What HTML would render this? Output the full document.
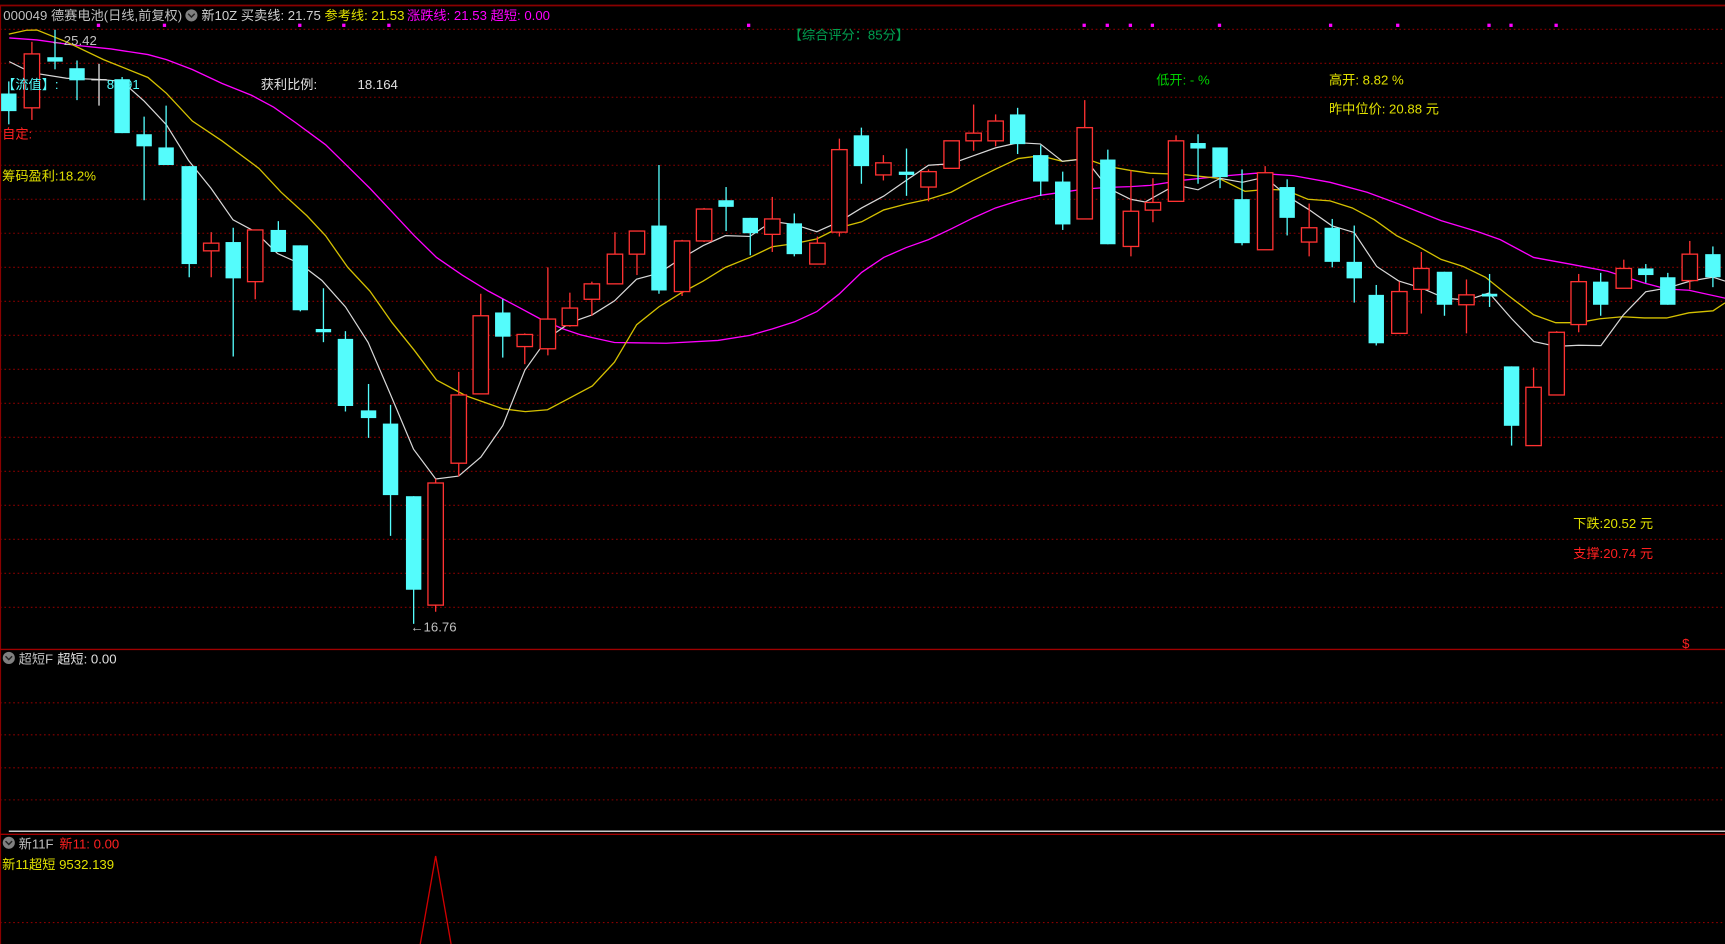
<!DOCTYPE html>
<html><head><meta charset="utf-8"><style>
html,body{margin:0;padding:0;background:#000;overflow:hidden}
svg{display:block}
text{font-family:"Liberation Sans","Noto Sans CJK SC",sans-serif;font-size:12px}
</style></head><body>
<svg width="1725" height="944" viewBox="0 0 1568 858" preserveAspectRatio="none" xmlns="http://www.w3.org/2000/svg">
<rect width="1568" height="858" fill="#000"/>
<g stroke="#8a0000" stroke-width="1" stroke-dasharray="1.5 2.5">
<line x1="0" x2="1568" y1="26.6" y2="26.6"/><line x1="0" x2="1568" y1="57.5" y2="57.5"/><line x1="0" x2="1568" y1="88.4" y2="88.4"/><line x1="0" x2="1568" y1="119.3" y2="119.3"/><line x1="0" x2="1568" y1="150.2" y2="150.2"/><line x1="0" x2="1568" y1="181.1" y2="181.1"/><line x1="0" x2="1568" y1="212" y2="212"/><line x1="0" x2="1568" y1="243" y2="243"/><line x1="0" x2="1568" y1="273.9" y2="273.9"/><line x1="0" x2="1568" y1="304.8" y2="304.8"/><line x1="0" x2="1568" y1="335.7" y2="335.7"/><line x1="0" x2="1568" y1="366.6" y2="366.6"/><line x1="0" x2="1568" y1="397.5" y2="397.5"/><line x1="0" x2="1568" y1="428.4" y2="428.4"/><line x1="0" x2="1568" y1="459.3" y2="459.3"/><line x1="0" x2="1568" y1="490.2" y2="490.2"/><line x1="0" x2="1568" y1="521.1" y2="521.1"/><line x1="0" x2="1568" y1="552" y2="552"/>
<line x1="0" x2="1568" y1="638.8" y2="638.8"/><line x1="0" x2="1568" y1="667.9" y2="667.9"/><line x1="0" x2="1568" y1="697.9" y2="697.9"/><line x1="0" x2="1568" y1="727" y2="727"/>
<line x1="0" x2="1568" y1="838.5" y2="838.5"/>
</g>
<line x1="0" x2="1568" y1="5" y2="5" stroke="#8a0000" stroke-width="1.5"/>
<line x1="0.5" x2="0.5" y1="5" y2="858" stroke="#8a0000" stroke-width="1"/>
<line x1="0" x2="1568" y1="590.3" y2="590.3" stroke="#a00000" stroke-width="1.3"/>
<line x1="8" x2="1568" y1="755.5" y2="755.5" stroke="#c8c8c8" stroke-width="1.3"/>
<line x1="0" x2="1568" y1="758.3" y2="758.3" stroke="#a00000" stroke-width="1.3"/>
<g fill="#ff00ff">
<rect x="88" y="21.5" width="3" height="3"/><rect x="148" y="21.5" width="3" height="3"/><rect x="271" y="21.5" width="3" height="3"/><rect x="311" y="21.5" width="3" height="3"/><rect x="352" y="21.5" width="3" height="3"/><rect x="679" y="21.5" width="3" height="3"/><rect x="984" y="21.5" width="3" height="3"/><rect x="1005" y="21.5" width="3" height="3"/><rect x="1026" y="21.5" width="3" height="3"/><rect x="1046" y="21.5" width="3" height="3"/><rect x="1107" y="21.5" width="3" height="3"/><rect x="1208" y="21.5" width="3" height="3"/><rect x="1269" y="21.5" width="3" height="3"/><rect x="1352" y="21.5" width="3" height="3"/><rect x="1372" y="21.5" width="3" height="3"/><rect x="1413" y="21.5" width="3" height="3"/>
</g>
<!-- MAs -->
<polyline fill="none" stroke="#ff00ff" stroke-width="1.2" points="8.4,34.5 33.6,36.3 67.2,41 100.9,44.5 134.5,49.6 151.3,54.2 174.8,63.2 201.7,75.8 228.6,86.6 248.8,97.4 269,111.7 295.9,131.5 316.1,151.3 336.2,171.1 356.4,192.6 376.6,214.2 396.8,234 420.3,250.1 443.8,264.5 470.7,278.9 490.9,289.7 511.1,298.7 527.2,304.1 538.4,306.9 558.5,311.3 605.6,312 652.7,309.4 681.6,304.8 701.8,299 722,292.6 742.5,283.2 762.6,267.4 783.2,247.6 803.3,234 823.8,225 844,217.8 864.5,208.1 884.7,198 904.9,189 925.4,182.6 945.6,177.5 965.7,174.7 986.3,171.8 1007.4,170.3 1027.6,169.6 1045.4,168.5 1074.5,163.9 1108.1,160.3 1141.8,157.4 1175.4,159.6 1209,165.7 1242.6,174.7 1276.3,187.2 1309.9,200.5 1343.5,210.6 1363.7,217.8 1394,234 1427.6,240.1 1461.2,246.5 1494.8,257.3 1515,262.7 1535.2,263.8 1568,271"/>
<polyline fill="none" stroke="#d4c000" stroke-width="1.2" points="8,31 24,27.5 33.6,27.3 60.5,38.1 94.1,54.2 134.5,70.4 151.3,84.8 174.8,110 201.7,128 235.4,153.1 255.5,174.7 279.1,196.2 295.9,214.2 316.1,243 336.2,264.5 356.4,293.3 376.6,318.4 396.8,345.4 423.7,359.8 457.3,371.6 477.5,374.1 497.7,372.4 518.2,361.6 538.4,350.8 558.5,329.2 578.7,295.1 598.9,278.9 619.1,266.3 639.2,255.5 659.4,243 681.6,234 701.8,224.3 722,221.4 742.5,217.1 762.6,207 783.2,201.6 803.3,190.8 823.8,185.4 844,181.1 864.5,174.7 884.7,163.9 904.9,153.8 925.4,144.1 945.6,141.6 965.7,146.6 986.3,144.1 1007.4,151.3 1027.6,154.9 1045.4,157.4 1074.5,158.5 1108.1,162.1 1131.7,173.9 1151.9,172.1 1168.7,172.8 1188.8,181.1 1209,182.6 1229.2,189 1249.4,199.8 1269.5,214.2 1289.7,224.3 1309.9,235.8 1330.1,242.2 1350.3,252 1370.4,268.1 1394,286.1 1414.1,293.3 1434.3,293.3 1454.5,289.7 1474.7,287.9 1494.8,289 1515,289 1535.2,284.3 1557.1,282.5 1568,275.3"/>
<polyline fill="none" stroke="#d8d8d8" stroke-width="1.1" points="8.4,56 28.6,66.1 60.5,71.1 90.8,72.2 111,74 131.1,92 151.3,113.5 171.5,146 191.7,171 211.8,199.8 232,210.6 252.2,230.4 272.4,239.5 292.5,254.8 314,278.9 334.6,311.2 354.7,358 375.9,408.3 396.1,435.3 416.9,432.7 437.1,415.5 457,386.8 477.1,336.4 497.6,307.6 518.2,293.3 538.4,286.1 558.5,273.5 578.7,253.7 598.9,248.3 619.1,235 639.2,223.2 659.4,214.2 681.6,214.9 701.8,201.2 722,204.1 742.5,210.6 762.6,201.6 783.2,189 803.3,178.2 823.8,163.9 844,150.2 864.5,148.8 884.7,141.6 904.9,134.4 925.4,129.7 945.6,130.8 965.7,146.6 986.3,144.4 1007.4,171 1027.6,181.1 1040.9,183.6 1068.5,168.2 1089,172.5 1109.2,162.1 1129.3,165.7 1149.8,161 1170,178.2 1190.2,190.8 1210.7,205.2 1230.9,211.3 1251.4,242.2 1271.6,255.5 1291.7,261.6 1313.3,271 1333.4,272.8 1353.6,266.3 1374.1,289.7 1394.3,310.5 1414.5,314.8 1435,313.8 1455.2,314.1 1475.7,286.1 1495.9,265.2 1516.1,261.6 1536.2,255.5 1557.1,251.9 1568,255.5"/>
<!-- cyan candles -->
<g stroke="#54fcfc" stroke-width="1.2">
<line x1="8" x2="8" y1="74" y2="113"/><line x1="50" x2="50" y1="27" y2="63"/><line x1="70" x2="70" y1="55" y2="91"/><line x1="111" x2="111" y1="70" y2="121"/><line x1="131" x2="131" y1="106" y2="182"/><line x1="151" x2="151" y1="96" y2="150"/><line x1="172" x2="172" y1="151" y2="252"/><line x1="212" x2="212" y1="207" y2="324"/><line x1="253" x2="253" y1="201" y2="229"/><line x1="273" x2="273" y1="223" y2="283"/><line x1="294" x2="294" y1="262" y2="311"/><line x1="314" x2="314" y1="301" y2="374"/><line x1="335" x2="335" y1="349" y2="398"/><line x1="355" x2="355" y1="368" y2="487"/><line x1="376" x2="376" y1="451" y2="567"/><line x1="457" x2="457" y1="272" y2="325"/><line x1="599" x2="599" y1="150" y2="267"/><line x1="660" x2="660" y1="170" y2="210"/><line x1="682" x2="682" y1="198" y2="232"/><line x1="722" x2="722" y1="194" y2="233"/><line x1="783" x2="783" y1="116" y2="167"/><line x1="824" x2="824" y1="135" y2="178"/><line x1="925" x2="925" y1="98" y2="140"/><line x1="946" x2="946" y1="132" y2="178"/><line x1="966" x2="966" y1="156" y2="209"/><line x1="1007" x2="1007" y1="136" y2="222"/><line x1="1089" x2="1089" y1="122" y2="167"/><line x1="1109" x2="1109" y1="134" y2="171"/><line x1="1129" x2="1129" y1="154" y2="223"/><line x1="1170" x2="1170" y1="163" y2="214"/><line x1="1211" x2="1211" y1="199" y2="243"/><line x1="1231" x2="1231" y1="205" y2="275"/><line x1="1251" x2="1251" y1="259" y2="314"/><line x1="1313" x2="1313" y1="247" y2="287"/><line x1="1354" x2="1354" y1="249" y2="279"/><line x1="1374" x2="1374" y1="333" y2="405"/><line x1="1455" x2="1455" y1="248" y2="287"/><line x1="1496" x2="1496" y1="240" y2="257"/><line x1="1516" x2="1516" y1="248" y2="277"/><line x1="1557" x2="1557" y1="224" y2="261"/>
</g>
<g fill="#54fcfc">
<rect x="1" y="85" width="14" height="16"/><rect x="43" y="52" width="14" height="4"/><rect x="63" y="62" width="14" height="11"/><rect x="104" y="72" width="14" height="49"/><rect x="124" y="122" width="14" height="11"/><rect x="144" y="134" width="14" height="16"/><rect x="165" y="151" width="14" height="89"/><rect x="205" y="220" width="14" height="33"/><rect x="246" y="209" width="14" height="20"/><rect x="266" y="223" width="14" height="59"/><rect x="287" y="299" width="14" height="3"/><rect x="307" y="308" width="14" height="61"/><rect x="328" y="373" width="14" height="7"/><rect x="348" y="385" width="14" height="65"/><rect x="369" y="451" width="14" height="85"/><rect x="450" y="284" width="14" height="22"/><rect x="592" y="205" width="14" height="59"/><rect x="653" y="182" width="14" height="6"/><rect x="675" y="198" width="14" height="14"/><rect x="715" y="203" width="14" height="28"/><rect x="776" y="123" width="14" height="28"/><rect x="817" y="156" width="14" height="3"/><rect x="918" y="104" width="14" height="27"/><rect x="939" y="141" width="14" height="24"/><rect x="959" y="165" width="14" height="39"/><rect x="1000" y="145" width="14" height="77"/><rect x="1082" y="130" width="14" height="5"/><rect x="1102" y="134" width="14" height="27"/><rect x="1122" y="181" width="14" height="40"/><rect x="1163" y="170" width="14" height="28"/><rect x="1204" y="207" width="14" height="31"/><rect x="1224" y="238" width="14" height="15"/><rect x="1244" y="268" width="14" height="44"/><rect x="1306" y="247" width="14" height="30"/><rect x="1347" y="267" width="14" height="2.5"/><rect x="1367" y="333" width="14" height="54"/><rect x="1448" y="256" width="14" height="21"/><rect x="1489" y="244" width="14" height="6"/><rect x="1509" y="252" width="14" height="25"/><rect x="1550" y="231" width="14" height="21"/>
</g>
<!-- white doji -->
<g stroke="#e0e0e0" stroke-width="1.2"><line x1="90" x2="90" y1="58" y2="96"/><line x1="83" x2="97" y1="72.5" y2="72.5"/></g>
<!-- red candles -->
<g stroke="#ff3232" stroke-width="1.2" fill="#000">
<line x1="29" x2="29" y1="38" y2="109"/><rect x="22" y="49" width="14" height="49"/>
<line x1="192" x2="192" y1="211" y2="252"/><rect x="185" y="221" width="14" height="7"/>
<line x1="232" x2="232" y1="209" y2="272"/><rect x="225" y="209" width="14" height="47"/>
<line x1="396" x2="396" y1="435" y2="556"/><rect x="389" y="439" width="14" height="111"/>
<line x1="417" x2="417" y1="338" y2="433"/><rect x="410" y="359" width="14" height="62"/>
<line x1="437" x2="437" y1="267" y2="358"/><rect x="430" y="287" width="14" height="71"/>
<line x1="477" x2="477" y1="303" y2="331"/><rect x="470" y="304" width="14" height="11"/>
<line x1="498" x2="498" y1="243" y2="323"/><rect x="491" y="290" width="14" height="27"/>
<line x1="518" x2="518" y1="266" y2="297"/><rect x="511" y="280" width="14" height="16"/>
<line x1="538" x2="538" y1="256" y2="287"/><rect x="531" y="258" width="14" height="14"/>
<line x1="559" x2="559" y1="211" y2="258"/><rect x="552" y="231" width="14" height="27"/>
<line x1="579" x2="579" y1="210" y2="250"/><rect x="572" y="210" width="14" height="21"/>
<line x1="620" x2="620" y1="218" y2="269"/><rect x="613" y="219" width="14" height="46"/>
<line x1="640" x2="640" y1="189" y2="220"/><rect x="633" y="190" width="14" height="29"/>
<line x1="702" x2="702" y1="179" y2="229"/><rect x="695" y="199" width="14" height="14"/>
<line x1="743" x2="743" y1="215" y2="240"/><rect x="736" y="221" width="14" height="19"/>
<line x1="763" x2="763" y1="126" y2="215"/><rect x="756" y="136" width="14" height="75"/>
<line x1="803" x2="803" y1="141" y2="164"/><rect x="796" y="148" width="14" height="11"/>
<line x1="844" x2="844" y1="154" y2="183"/><rect x="837" y="156" width="14" height="14"/>
<line x1="865" x2="865" y1="128" y2="153"/><rect x="858" y="128" width="14" height="25"/>
<line x1="885" x2="885" y1="95" y2="137"/><rect x="878" y="121" width="14" height="7"/>
<line x1="905" x2="905" y1="104" y2="133"/><rect x="898" y="110" width="14" height="18"/>
<line x1="986" x2="986" y1="91" y2="199"/><rect x="979" y="116" width="14" height="83"/>
<line x1="1028" x2="1028" y1="155" y2="233"/><rect x="1021" y="192" width="14" height="32"/>
<line x1="1048" x2="1048" y1="162" y2="202"/><rect x="1041" y="184" width="14" height="7"/>
<line x1="1069" x2="1069" y1="123" y2="183"/><rect x="1062" y="128" width="14" height="55"/>
<line x1="1150" x2="1150" y1="151" y2="227"/><rect x="1143" y="157" width="14" height="70"/>
<line x1="1190" x2="1190" y1="185" y2="233"/><rect x="1183" y="207" width="14" height="13"/>
<line x1="1272" x2="1272" y1="256" y2="303"/><rect x="1265" y="265" width="14" height="38"/>
<line x1="1292" x2="1292" y1="229" y2="285"/><rect x="1285" y="244" width="14" height="19"/>
<line x1="1333" x2="1333" y1="254" y2="303"/><rect x="1326" y="268" width="14" height="9"/>
<line x1="1394" x2="1394" y1="334" y2="405"/><rect x="1387" y="352" width="14" height="53"/>
<line x1="1415" x2="1415" y1="301" y2="359"/><rect x="1408" y="302" width="14" height="57"/>
<line x1="1435" x2="1435" y1="249" y2="302"/><rect x="1428" y="256" width="14" height="39"/>
<line x1="1476" x2="1476" y1="236" y2="262"/><rect x="1469" y="244" width="14" height="18"/>
<line x1="1536" x2="1536" y1="219" y2="263"/><rect x="1529" y="231" width="14" height="24"/>
</g>
<!-- header -->
<text x="3" y="18" fill="#c0c0c0">000049 德赛电池(日线,前复权)</text>
<circle cx="174" cy="14" r="5.5" fill="#808080"/><path d="M171,12.5 L174,15.5 L177,12.5" stroke="#222" stroke-width="1.3" fill="none"/>
<text x="183" y="18" fill="#d0d0d0">新10Z  买卖线: 21.75</text>
<text x="295" y="18" fill="#e0e000">参考线: 21.53</text>
<text x="370" y="18" fill="#ff00ff">涨跌线: 21.53</text>
<text x="446" y="18" fill="#ff00ff">超短: 0.00</text>
<text x="717" y="36" fill="#00a050">【综合评分：85分】</text>
<text x="46" y="41" fill="#c0c0c0">←25.42</text>
<text x="2" y="81" fill="#54fcfc">【流值】:</text>
<text x="97" y="81" fill="#54fcfc">80.91</text>
<text x="237" y="81" fill="#e0e0e0">获利比例:</text>
<text x="325" y="81" fill="#e0e0e0">18.164</text>
<text x="2" y="126" fill="#ff2020">自定:</text>
<text x="2" y="164" fill="#e0e000">筹码盈利:18.2%</text>
<text x="373" y="574" fill="#c0c0c0">←16.76</text>
<text x="1051" y="77" fill="#00d000">低开: - %</text>
<text x="1208" y="77" fill="#e0e000">高开: 8.82 %</text>
<text x="1208" y="103" fill="#e0e000">昨中位价: 20.88 元</text>
<text x="1430" y="480" fill="#e0e000">下跌:20.52 元</text>
<text x="1430" y="507" fill="#ff2020">支撑:20.74 元</text>
<text x="1529" y="589" fill="#ff2020" font-size="11">$</text>
<!-- sub panels -->
<circle cx="8" cy="598" r="5.5" fill="#808080"/><path d="M5,596.5 L8,599.5 L11,596.5" stroke="#222" stroke-width="1.3" fill="none"/>
<text x="17" y="603" fill="#c0c0c0">超短F</text><text x="52" y="603" fill="#e0e0e0">超短: 0.00</text>
<circle cx="8" cy="766" r="5.5" fill="#808080"/><path d="M5,764.5 L8,767.5 L11,764.5" stroke="#222" stroke-width="1.3" fill="none"/>
<text x="17" y="771" fill="#c0c0c0">新11F</text><text x="54" y="771" fill="#ff2020">新11: 0.00</text>
<text x="2" y="790" fill="#e0e000">新11超短 9532.139</text>
<polyline points="382,858 396,778 410,858" fill="none" stroke="#d00000" stroke-width="1.2"/>
</svg>
</body></html>
